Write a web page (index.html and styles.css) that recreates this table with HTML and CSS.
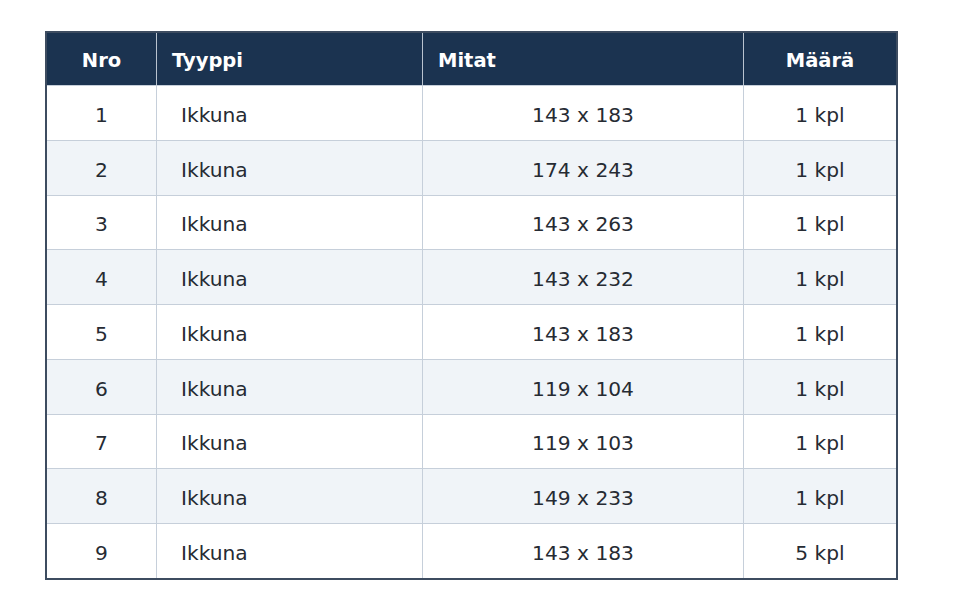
FILE: index.html
```html
<!DOCTYPE html>
<html lang="fi">
<head>
<meta charset="utf-8">
<title>Ikkunat</title>
<link rel="stylesheet" href="styles.css">
</head>
<body>
<div class="page">
  <table class="tbl">
    <colgroup>
      <col class="c-nro">
      <col class="c-type">
      <col class="c-dim">
      <col class="c-qty">
    </colgroup>
    <thead>
      <tr>
        <th class="center">Nro</th>
        <th class="left">Tyyppi</th>
        <th class="left">Mitat</th>
        <th class="center">Määrä</th>
      </tr>
    </thead>
    <tbody>
      <tr><td class="center">1</td><td class="type">Ikkuna</td><td class="center">143 x 183</td><td class="center">1 kpl</td></tr>
      <tr><td class="center">2</td><td class="type">Ikkuna</td><td class="center">174 x 243</td><td class="center">1 kpl</td></tr>
      <tr><td class="center">3</td><td class="type">Ikkuna</td><td class="center">143 x 263</td><td class="center">1 kpl</td></tr>
      <tr><td class="center">4</td><td class="type">Ikkuna</td><td class="center">143 x 232</td><td class="center">1 kpl</td></tr>
      <tr><td class="center">5</td><td class="type">Ikkuna</td><td class="center">143 x 183</td><td class="center">1 kpl</td></tr>
      <tr><td class="center">6</td><td class="type">Ikkuna</td><td class="center">119 x 104</td><td class="center">1 kpl</td></tr>
      <tr><td class="center">7</td><td class="type">Ikkuna</td><td class="center">119 x 103</td><td class="center">1 kpl</td></tr>
      <tr><td class="center">8</td><td class="type">Ikkuna</td><td class="center">149 x 233</td><td class="center">1 kpl</td></tr>
      <tr><td class="center">9</td><td class="type">Ikkuna</td><td class="center">143 x 183</td><td class="center">5 kpl</td></tr>
    </tbody>
  </table>
</div>
</body>
</html>
```
FILE: styles.css
```css
html, body {
  margin: 0;
  padding: 0;
  background: #ffffff;
}
.page {
  padding: 31px 0 0 45px;
  font-family: "DejaVu Sans", sans-serif;
}
.tbl {
  border-collapse: separate;
  border-spacing: 0;
  width: 853px;
  table-layout: fixed;
  border: 2px solid #3d4c60;
}
.c-nro { width: 109px; }
.c-type { width: 266px; }
.c-dim { width: 321px; }
.c-qty { width: 153px; }
.tbl th {
  background: #1b3350;
  color: #ffffff;
  font-weight: bold;
  font-size: 19.5px;
  height: 50px;
  padding: 2px 15px 0;
  border-left: 1px solid #b9c3cf;
}
.tbl th:first-child { border-left: none; }
.tbl td {
  color: #262b33;
  font-size: 20.2px;
  height: 49.78px;
  padding: 4px 15px 0;
  border-left: 1px solid #c6cfda;
  border-top: 1px solid #c6cfda;
}
.tbl td:first-child { border-left: none; }
.tbl tbody tr:nth-child(even) td { background: #f0f4f8; }
.center { text-align: center; }
.left { text-align: left; }
.tbl td.type { text-align: left; padding-left: 24px; }
```
